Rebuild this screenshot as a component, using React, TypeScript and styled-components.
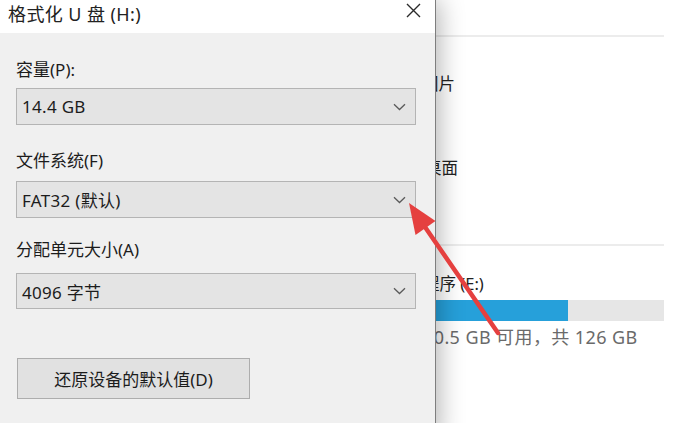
import React from "react";
import styled, { createGlobalStyle } from "styled-components";

const Global = createGlobalStyle`
  html, body { margin: 0; padding: 0; background: #fff; }
  body { width: 676px; height: 423px; overflow: hidden; font-family: "Noto Sans", "Noto Sans CJK SC", sans-serif; color: #1f1f1f; }
`;

const Desktop = styled.div`
  position: relative;
  width: 676px;
  height: 423px;
  overflow: hidden;
  background: #fff;
`;

/* Explorer window behind the dialog */
const Explorer = styled.div`
  display: flex;
  flex-direction: column;
  width: 676px;
  height: 423px;
  padding-left: 421px;
  box-sizing: border-box;
`;

const ExplorerCol = styled.div`
  width: 243px;
  display: flex;
  flex-direction: column;
`;

const HeaderArea = styled.div`
  height: 35px;
  border-bottom: 2px solid #ececec;
`;

const FolderItem = styled.div<{ $top: number; $left: number }>`
  margin-top: ${(p) => p.$top}px;
  margin-left: ${(p) => p.$left}px;
  height: 24px;
  line-height: 24px;
  font-size: 16.5px;
  color: #222;
`;

const Divider = styled.div<{ $top: number }>`
  margin-top: ${(p) => p.$top}px;
  height: 2px;
  background: #ececec;
`;

const DriveName = styled.div`
  margin-top: 26px;
  margin-left: 2px;
  height: 24px;
  line-height: 24px;
  font-size: 16.5px;
  color: #222;
`;

const Bar = styled.div`
  margin-top: 4px;
  height: 21px;
  background: #e6e6e6;
  display: flex;
`;

const BarFill = styled.div`
  background: #26a0da;
  height: 100%;
`;

const DriveInfo = styled.div`
  margin-top: 3px;
  margin-left: 2px;
  height: 26px;
  line-height: 26px;
  font-size: 18px;
  letter-spacing: 0.4px;
  color: #6a6a6a;
`;

/* Dialog */
const Dialog = styled.div`
  position: absolute;
  left: 0;
  top: 0;
  width: 435px;
  height: 440px;
  background: #f0f0f0;
  border-right: 1px solid #7e7e7e;
  box-shadow: 3px 0 24px rgba(0, 0, 0, 0.3);
  display: flex;
  flex-direction: column;
`;

const TitleBar = styled.div`
  height: 33px;
  background: #fff;
  display: flex;
  align-items: center;
  justify-content: space-between;
  padding: 0 14px 0 8px;
  flex-shrink: 0;
`;

const Title = styled.div`
  font-size: 18px;
  letter-spacing: 0.4px;
  color: #222;
  line-height: 22px;
  margin-top: -6px;
`;

const Close = styled.div`
  width: 15px;
  height: 15px;
  margin-top: -13px;
  display: flex;
`;

const Body = styled.div`
  display: flex;
  flex-direction: column;
  padding: 27px 19px 0 16px;
`;

const Label = styled.div<{ $top: number }>`
  margin-top: ${(p) => p.$top}px;
  height: 20px;
  line-height: 20px;
  font-size: 17px;
  color: #1c1c1c;
`;

const Select = styled.div<{ $top: number; $h: number }>`
  margin-top: ${(p) => p.$top}px;
  height: ${(p) => p.$h - 2}px;
  border: 1px solid #b4b4b4;
  background: #e4e4e4;
  display: flex;
  align-items: center;
  justify-content: space-between;
  padding: 0 9px 0 5px;
`;

const SelectText = styled.span`
  font-size: 17px;
  letter-spacing: 0.3px;
  color: #1c1c1c;
`;

const Button = styled.div`
  margin-top: 49px;
  margin-left: 1px;
  width: 231px;
  height: 39px;
  border: 1px solid #adadad;
  background: #e1e1e1;
  display: flex;
  align-items: center;
  justify-content: center;
  font-size: 17px;
  color: #1c1c1c;
`;

const Overlay = styled.svg`
  position: absolute;
  left: 0;
  top: 0;
  pointer-events: none;
`;

const Chevron = () => (
  <svg width="13" height="8" viewBox="0 0 13 8">
    <path d="M1 1.2 L6.5 6.5 L12 1.2" fill="none" stroke="#5a5a5a" strokeWidth="1.3" />
  </svg>
);

export default function App() {
  return (
    <Desktop>
      <Global />
      <Explorer>
        <ExplorerCol>
          <HeaderArea />
          <FolderItem $top={35} $left={1}>图片</FolderItem>
          <FolderItem $top={60} $left={4}>桌面</FolderItem>
          <Divider $top={64} />
          <DriveName>程序 (E:)</DriveName>
          <Bar>
            <BarFill style={{ width: `${(147 / 243) * 100}%` }} />
          </Bar>
          <DriveInfo>20.5 GB 可用，共 126 GB</DriveInfo>
        </ExplorerCol>
      </Explorer>

      <Dialog>
        <TitleBar>
          <Title>格式化 U 盘 (H:)</Title>
          <Close>
            <svg width="15" height="15" viewBox="0 0 15 15">
              <path d="M1 1 L14 14 M14 1 L1 14" stroke="#2b2b2b" strokeWidth="1.4" />
            </svg>
          </Close>
        </TitleBar>
        <Body>
          <Label $top={0}>容量(P):</Label>
          <Select $top={8} $h={37}>
            <SelectText>14.4 GB</SelectText>
            <Chevron />
          </Select>
          <Label $top={26}>文件系统(F)</Label>
          <Select $top={10} $h={37}>
            <SelectText>FAT32 (默认)</SelectText>
            <Chevron />
          </Select>
          <Label $top={22}>分配单元大小(A)</Label>
          <Select $top={13} $h={36}>
            <SelectText>4096 字节</SelectText>
            <Chevron />
          </Select>
          <Button>还原设备的默认值(D)</Button>
        </Body>
      </Dialog>

      <Overlay width="676" height="423" viewBox="0 0 676 423">
        <line x1="498" y1="333" x2="425" y2="227" stroke="#e5403f" strokeWidth="4.5" strokeLinecap="round" />
        <polygon points="409,203 435.5,221 415.5,235" fill="#e5403f" />
      </Overlay>
    </Desktop>
  );
}
